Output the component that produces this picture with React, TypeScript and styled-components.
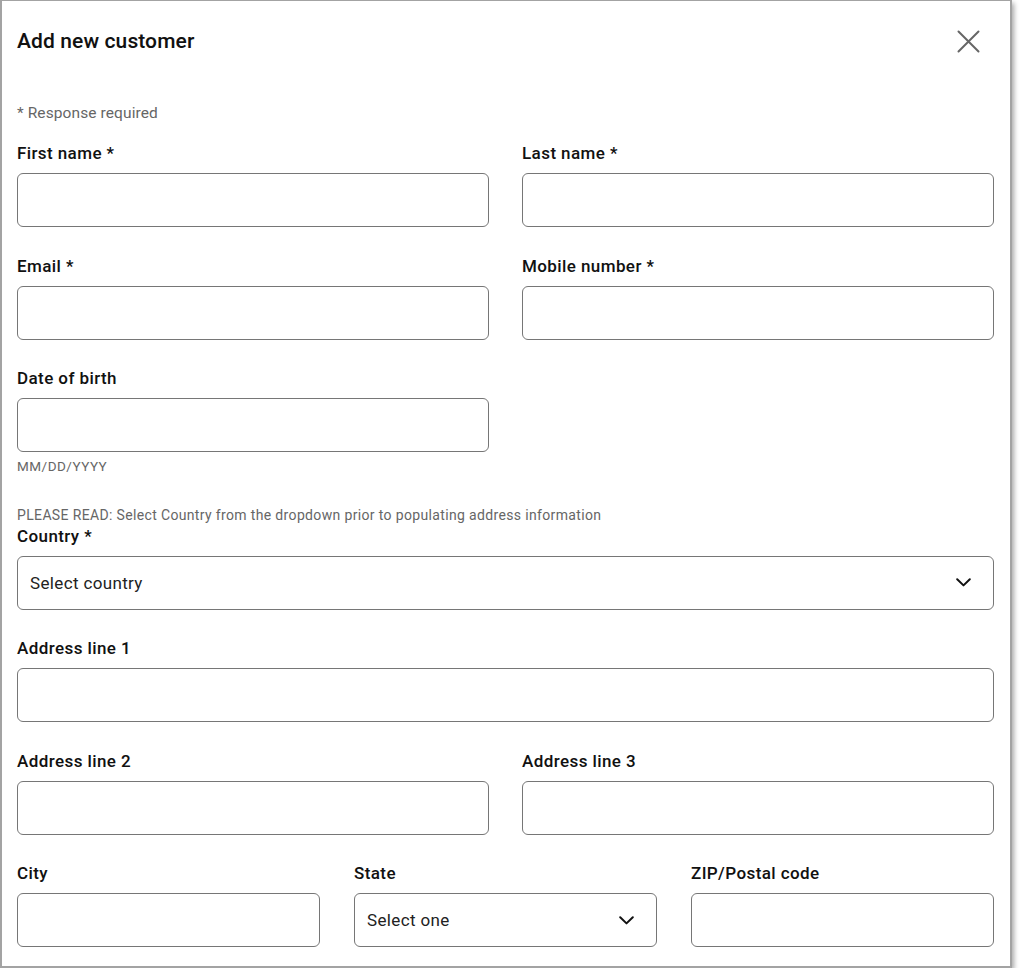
import React from "react";
import styled, { createGlobalStyle } from "styled-components";

const GlobalStyle = createGlobalStyle`
  body {
    margin: 0;
    background: #ffffff;
    font-family: Roboto, "Liberation Sans", Arial, sans-serif;
    color: #111111;
  }
`;

type FieldDef = {
  label: string;
  required?: boolean;
  kind?: "input" | "select";
  placeholder?: string;
  hint?: string;
};

function ChevronIcon() {
  return (
    <svg width="15" height="9" viewBox="0 0 15 9">
      <polyline
        points="1.2,1.2 7.5,7.4 13.8,1.2"
        fill="none"
        stroke="#111"
        strokeWidth="2"
        strokeLinecap="round"
        strokeLinejoin="round"
      />
    </svg>
  );
}

function CloseIcon() {
  return (
    <svg width="23" height="23" viewBox="0 0 23 23">
      <path
        d="M1.5 1.5 L21.5 21.5 M21.5 1.5 L1.5 21.5"
        stroke="#666"
        strokeWidth="2"
        strokeLinecap="round"
      />
    </svg>
  );
}

function Field({ label, required, kind = "input", placeholder, hint }: FieldDef) {
  return (
    <Style.Field>
      <Style.Label>
        {label}
        {required && " *"}
      </Style.Label>
      {kind === "select" ? (
        <Style.Select type="button">
          <span>{placeholder}</span>
          <ChevronIcon />
        </Style.Select>
      ) : (
        <Style.Input type="text" />
      )}
      {hint && <Style.Hint>{hint}</Style.Hint>}
    </Style.Field>
  );
}

export default function App() {
  return (
    <>
      <GlobalStyle />
      <Style.Panel>
        <Style.Header>
          <Style.Title>Add new customer</Style.Title>
          <Style.Close aria-label="Close">
            <CloseIcon />
          </Style.Close>
        </Style.Header>
        <Style.Required>* Response required</Style.Required>
        <Style.Form>
          <Style.Row cols={2}>
            <Field label="First name" required />
            <Field label="Last name" required />
          </Style.Row>
          <Style.Row cols={2}>
            <Field label="Email" required />
            <Field label="Mobile number" required />
          </Style.Row>
          <Style.Row cols={2}>
            <Field label="Date of birth" hint="MM/DD/YYYY" />
          </Style.Row>
          <div>
            <Style.Notice>
              PLEASE READ: Select Country from the dropdown prior to populating
              address information
            </Style.Notice>
            <Style.Row cols={1}>
              <Field
                label="Country"
                required
                kind="select"
                placeholder="Select country"
              />
            </Style.Row>
          </div>
          <Style.Row cols={1}>
            <Field label="Address line 1" />
          </Style.Row>
          <Style.Row cols={2}>
            <Field label="Address line 2" />
            <Field label="Address line 3" />
          </Style.Row>
          <Style.Row cols={3}>
            <Field label="City" />
            <Field label="State" kind="select" placeholder="Select one" />
            <Field label="ZIP/Postal code" />
          </Style.Row>
        </Style.Form>
      </Style.Panel>
    </>
  );
}

const Style = {
  Panel: styled.div`
    box-sizing: border-box;
    width: 1012px;
    height: 968px;
    border: 2px solid #a3a3a3;
    border-top-width: 1px;
    background: #fff;
    box-shadow: 2px 3px 5px rgba(0, 0, 0, 0.35);
    padding: 27px 16px 0 15px;
  `,
  Header: styled.div`
    display: flex;
    align-items: center;
    justify-content: space-between;
    height: 26px;
  `,
  Title: styled.h1`
    margin: 0;
    font-family: "Roboto Medium", Roboto, "Liberation Sans", sans-serif;
    font-size: 21px;
    line-height: 26px;
    font-weight: 500;
    color: #111;
    letter-spacing: 0.1px;
  `,
  Close: styled.button`
    display: flex;
    border: 0;
    background: none;
    padding: 0;
    margin-right: 14px;
    cursor: pointer;
  `,
  Required: styled.div`
    margin-top: 49px;
    font-size: 15.5px;
    line-height: 20px;
    letter-spacing: 0.1px;
    color: #666;
  `,
  Form: styled.div`
    display: flex;
    flex-direction: column;
    gap: 28.5px;
    margin-top: 20px;
  `,
  Row: styled.div<{ cols: number }>`
    display: grid;
    grid-template-columns: repeat(${(p) => p.cols}, 1fr);
    column-gap: ${(p) => (p.cols === 3 ? 34 : 33)}px;
  `,
  Field: styled.div`
    display: flex;
    flex-direction: column;
  `,
  Label: styled.label`
    font-family: "Roboto Medium", Roboto, "Liberation Sans", sans-serif;
    font-size: 17px;
    line-height: 20px;
    font-weight: 500;
    letter-spacing: 0.4px;
    color: #111;
    margin-bottom: 10px;
  `,
  Input: styled.input`
    box-sizing: border-box;
    height: 54px;
    width: 100%;
    border: 1px solid #767676;
    border-radius: 6px;
    background: #fff;
    padding: 0 12px;
    font: inherit;
    outline: none;
  `,
  Select: styled.button`
    box-sizing: border-box;
    height: 54px;
    width: 100%;
    display: flex;
    align-items: center;
    justify-content: space-between;
    border: 1px solid #767676;
    border-radius: 6px;
    background: #fff;
    padding: 0 22px 0 12px;
    font-family: inherit;
    font-size: 17px;
    letter-spacing: 0.35px;
    color: #222;
    cursor: pointer;
    text-align: left;
  `,
  Hint: styled.div`
    margin-top: 6px;
    font-size: 13.5px;
    line-height: 16px;
    letter-spacing: 0.5px;
    color: #666;
  `,
  Notice: styled.div`
    padding-top: 4px;
    margin-bottom: 3px;
    font-size: 14px;
    line-height: 16px;
    letter-spacing: 0.35px;
    color: #666;
  `,
};
